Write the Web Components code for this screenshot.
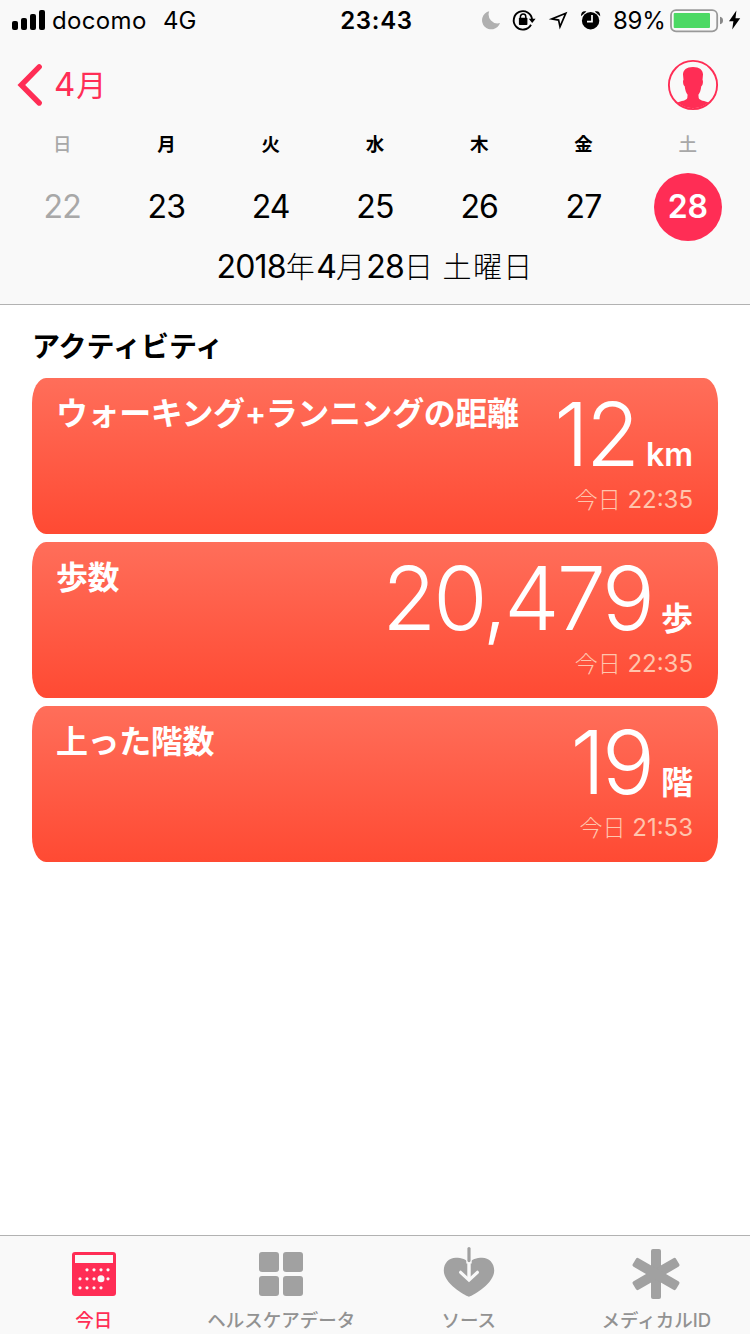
<!DOCTYPE html>
<html lang="ja">
<head>
<meta charset="utf-8">
<title>ヘルスケア</title>
<style>
html,body{margin:0;padding:0}
body{width:750px;height:1334px;overflow:hidden;background:#fff;color:#000;
font-family:"Inter","Noto Sans CJK JP",sans-serif;
--pink:#ff2d55;--bar:#f9f9f9;--line:#b2b2b2;--gray:#a1a1a1}
</style>
</head>
<body>
<health-app></health-app>
<script>
function define(name, css, html) {
  customElements.define(name, class extends HTMLElement {
    connectedCallback() {
      if (this.shadowRoot) return;
      const t = document.createElement('template');
      const body = typeof html === 'function' ? html(this) : html;
      t.innerHTML = '<style>*{box-sizing:border-box}svg{display:block;flex:none}' + css + '</style>' + body;
      this.attachShadow({ mode: 'open' }).appendChild(t.content.cloneNode(true));
    }
  });
}

define('status-bar', `
:host{display:grid;grid-template-columns:1fr auto 1fr;height:41px;line-height:41px;font-size:24px;white-space:nowrap}
div{display:flex}
.l{padding-left:12px}.carrier{margin-left:6px;width:111px;letter-spacing:.35px}
.time{font-weight:600;letter-spacing:.7px;padding-left:3px}
.r{justify-content:flex-end;padding-right:8px}.pct{width:56px;letter-spacing:-.3px}
`, `
<div class="l">
<svg width="34" height="41" viewBox="12 0 34 41"><rect x="12" y="21" width="6" height="9" rx="2"/><rect x="21" y="18" width="6" height="12" rx="2"/><rect x="30" y="14" width="6" height="16" rx="2"/><rect x="39" y="10" width="6" height="20" rx="2"/></svg>
<span class="carrier">docomo</span><span>4G</span></div>
<div class="time">23:43</div>
<div class="r">
<svg width="27" height="41" viewBox="480 0 27 41"><path fill="#b0b0b0" d="M489.2 11.2A9.2 9.2 0 1 0 500 23A9 9 0 0 1 489.2 11.2Z"/></svg>
<svg width="36" height="41" viewBox="507 0 36 41"><path fill="none" stroke="#000" stroke-width="1.9" d="M531 24.8A9.2 9.2 0 1 1 532.1 19.6"/><path d="M528.8 18.7h6.8l-3.4 4.3z"/><rect x="518.9" y="17.8" width="8.5" height="7.2" rx=".8"/><path fill="none" stroke="#000" stroke-width="1.5" d="M520.4 18.5v-1.7a2.7 2.7 0 0 1 5.4 0v1.7"/></svg>
<svg width="32" height="41" viewBox="543 0 32 41"><path fill="none" stroke="#000" stroke-width="1.7" d="M565.8 13.2L551.8 18.9L558.6 20.1L560 26.8Z"/></svg>
<svg width="38" height="41" viewBox="575 0 38 41"><circle cx="590.6" cy="20.7" r="8.7"/><path d="M581 16.2C580.8 12.2 583 10.4 586.4 11.4ZM600.2 16.2C600.4 12.2 598.2 10.4 594.8 11.4Z"/><path fill="none" stroke="#fff" stroke-width="1.7" d="M592 15v6.6h-5"/></svg>
<span class="pct">89%</span>
<svg width="73" height="41" viewBox="669 0 73 41"><rect x="671" y="10.1" width="46.2" height="21.2" rx="5" fill="none" stroke="#999" stroke-width="1.8"/><rect x="673.7" y="13" width="36.3" height="15" rx="1" fill="#4cd964"/><path fill="#888" d="M720 16.7q3 .6 3 3.8t-3 3.8z"/><path d="M736.4 10.4L729 21.3h4.4L732.2 29.5L740.2 18.2h-4.7z"/></svg>
</div>`);

define('nav-bar', `
:host{display:flex;justify-content:space-between;height:87px;align-items:center;padding:0 31px 0 16px;color:var(--pink)}
.back{display:flex;align-items:center;font-size:33px;line-height:60px}.m{font-size:30px;margin-left:1px}
.back svg{margin-right:9px}
`, `
<div class="back"><svg width="29" height="44" viewBox="16 62 29 44"><path d="M39.2 65.9L21.3 84L39.2 102" fill="none" stroke="#ff2d55" stroke-width="5.4" stroke-linecap="round"/></svg><span>4<span class="m">月</span></span></div>
<svg width="52" height="52" viewBox="667 58 52 52"><circle cx="693" cy="84" r="24.1" fill="none" stroke="#ff2d55" stroke-width="1.9"/><path fill="#ff2d55" d="M693 66C686.5 66 683 69 683 73.5L683.5 79C682.6 79.5 683 84.5 684.7 85.3C685.2 89.5 686.2 92 687.6 93.8L687.3 97C686.5 99.6 681 100 677.5 101.5A24 24 0 0 0 708.5 101.5C705 100 699.5 99.6 698.7 97L698.4 93.8C699.8 92 700.8 89.5 701.3 85.3C703 84.5 703.4 79.5 702.5 79L703 73.5C703 69 699.5 66 693 66Z"/></svg>`);

define('day-cell', `
:host{display:flex;flex-direction:column;align-items:center}
.w{height:32px;line-height:32px;font-size:18.5px;font-weight:600}
.n{margin-top:13px;width:68px;height:68px;line-height:68px;border-radius:50%;text-align:center;font-size:32px;letter-spacing:-.8px}
:host([off]) .w,:host([weekend]) .w{color:#a8a8a8;font-weight:500}
:host([off]) .n{color:#a8a8a8}
:host([selected]) .n{background:var(--pink);color:#fff;font-weight:600;letter-spacing:0}
`, el => `<div class="w">${el.getAttribute('weekday')}</div><div class="n"><slot></slot></div>`);

define('week-header', `
:host{display:block;height:305px;background:var(--bar);border-bottom:1px solid var(--line)}
.days{display:grid;grid-template-columns:repeat(7,1fr);padding:0 10px}
.date{text-align:center;font-size:32px;line-height:52px;white-space:pre;letter-spacing:-.8px}
i{font-style:normal;font-size:29px;letter-spacing:1.3px;font-weight:300}
`, `
<status-bar></status-bar><nav-bar></nav-bar>
<div class="days">
<day-cell weekday="日" off>22</day-cell><day-cell weekday="月">23</day-cell><day-cell weekday="火">24</day-cell><day-cell weekday="水">25</day-cell><day-cell weekday="木">26</day-cell><day-cell weekday="金">27</day-cell><day-cell weekday="土" weekend selected>28</day-cell>
</div>
<div class="date">2018<i>年</i>4<i>月</i>28<i>日</i> <i>土曜日</i></div>`);

define('metric-card', `
:host{display:flex;justify-content:space-between;height:156px;padding:0 25px 0 24px;border-radius:14px/25px;color:#fff;white-space:nowrap;
background:linear-gradient(#ff6e5a,#ff4a33)}
.label{padding-top:14px;line-height:44px;font-size:32px;font-weight:600;letter-spacing:-.4px}
.side{padding-top:12px;text-align:right}
.value{line-height:88px;height:88px;font-size:88px;font-weight:300;letter-spacing:-3px}
.unit{font-size:32px;font-weight:600;letter-spacing:0;margin-left:9px;line-height:0}
.when{line-height:43px;font-size:24px;color:#ffc5ad}
.when i{font-style:normal;font-size:23px;font-weight:300}
`, el => `<div class="label"><slot></slot></div><div class="side"><div class="value">${el.getAttribute('value')}<span class="unit">${el.getAttribute('unit')}</span></div><div class="when"><i>今日</i> ${el.getAttribute('time')}</div></div>`);

define('activity-list', `
:host{display:block;flex:1;padding:21px 32px 0}
h2{margin:0;height:52px;line-height:42px;font-size:28px;font-weight:600;letter-spacing:0}
.cards{display:grid;gap:8px}
`, `<h2>アクティビティ</h2><div class="cards">
<metric-card value="12" unit="km" time="22:35">ウォーキング+ランニングの距離</metric-card>
<metric-card value="20,479" unit="歩" time="22:35">歩数</metric-card>
<metric-card value="19" unit="階" time="21:53">上った階数</metric-card></div>`);

const dots = [[87,1269.8],[94,1269.8],[101,1269.8],[108,1269.8],[80,1278.8],[87,1278.8],[94,1278.8],[108,1278.8],[80,1287.8],[87,1287.8],[94,1287.8],[101,1287.8]]
  .map(([x, y]) => `<circle cx="${x}" cy="${y}" r="1.6"/>`).join('');
const icons = {
  today: `<svg width="56" height="60" viewBox="66 1244 56 60"><rect x="72" y="1252" width="44" height="44" rx="3" fill="#ff2d55"/><g fill="#f9f9f9"><rect x="75" y="1255" width="38" height="8"/>${dots}<circle cx="101" cy="1278.8" r="3.5"/></g></svg>`,
  data: `<svg width="56" height="60" viewBox="254 1244 56 60" fill="#a1a1a1"><rect x="260" y="1252" width="20" height="20" rx="3"/><rect x="284" y="1252" width="20" height="20" rx="3"/><rect x="260" y="1276" width="20" height="20" rx="3"/><rect x="284" y="1276" width="20" height="20" rx="3"/></svg>`,
  source: `<svg width="56" height="60" viewBox="440 1244 56 60"><path fill="#a1a1a1" d="M468 1296.8C463 1295 442.8 1283.5 442.8 1270.5C442.8 1263 448 1257.8 454.8 1257.8C460.5 1257.8 465.5 1259.5 468 1263C470.5 1259.5 475.5 1257.8 481.2 1257.8C488 1257.8 493.2 1263 493.2 1270.5C493.2 1283.5 473 1295 468 1296.8Z"/><path stroke="#f9f9f9" stroke-width="5.4" d="M468 1256v7.5"/><path stroke="#a1a1a1" stroke-width="3.2" stroke-linecap="round" d="M468 1248.6v12"/><path fill="none" stroke="#f9f9f9" stroke-width="3.4" d="M468 1263v17"/><path fill="none" stroke="#f9f9f9" stroke-width="3.2" stroke-linecap="round" d="M459.6 1272.3l8.4 7.8 8.4-7.8"/></svg>`,
  medical: `<svg width="56" height="60" viewBox="627 1244 56 60" fill="#a1a1a1"><rect x="650" y="1249" width="10" height="50" rx="2"/><rect x="650" y="1249" width="10" height="50" rx="2" transform="rotate(60 655 1274)"/><rect x="650" y="1249" width="10" height="50" rx="2" transform="rotate(-60 655 1274)"/></svg>`
};
define('tab-item', `
:host{display:flex;flex-direction:column;align-items:center;padding-top:8px;color:#929292;font-size:18.5px;font-weight:500;white-space:nowrap}
:host([active]){color:var(--pink)}
span{line-height:32px}
`, el => icons[el.getAttribute('icon')] + '<span><slot></slot></span>');

define('tab-bar', `
:host{display:grid;grid-template-columns:repeat(4,1fr);height:99px;background:var(--bar);border-top:1px solid var(--line)}
`, `<tab-item icon="today" active>今日</tab-item><tab-item icon="data">ヘルスケアデータ</tab-item><tab-item icon="source">ソース</tab-item><tab-item icon="medical">メディカルID</tab-item>`);

define('health-app', `:host{display:flex;flex-direction:column;width:750px;height:1334px}week-header,tab-bar{flex:none}`,
  `<week-header></week-header><activity-list></activity-list><tab-bar></tab-bar>`);
</script>
</body>
</html>
